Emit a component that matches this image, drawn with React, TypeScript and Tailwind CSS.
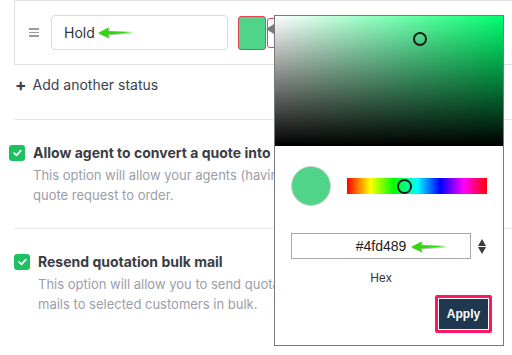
import React from 'react';

const HUE = 146;

function GreenArrow({ className }: { className?: string }) {
  return (
    <svg className={className} width="40" height="14" viewBox="0 0 40 14">
      <path d="M2 8.2 L13 2.4 L12 6.2 L38 7.2 L12 9.6 L13 13 Z" fill="#000" opacity="0.25" />
      <path d="M1 7 L12 1.2 L11 5 L37 6 L11 8.4 L12 12 Z" fill="#2fd80a" />
    </svg>
  );
}

function Check() {
  return (
    <svg width="9" height="8" viewBox="0 0 9 8">
      <path d="M1.2 4.2 L3.5 6.3 L7.8 1.6" stroke="#fff" strokeWidth="1.8" fill="none" strokeLinecap="round" strokeLinejoin="round" />
    </svg>
  );
}

function Option({ title, lines, indent }: { title: string; lines: string[]; indent: string }) {
  return (
    <div className={`flex gap-[8px] ${indent}`}>
      <span className="mt-[1px] flex h-[16px] w-[16px] shrink-0 items-center justify-center rounded-[3px] bg-[#1ec15f]">
        <Check />
      </span>
      <div className="whitespace-nowrap">
        <div className="text-[14px] leading-[18px] font-bold text-[#3a3d44]">{title}</div>
        <div className="mt-[3px] text-[13px] leading-[20px] text-[#9a9ea8]">
          {lines.map((l) => (
            <div key={l}>{l}</div>
          ))}
        </div>
      </div>
    </div>
  );
}

function Picker() {
  return (
    <div className="absolute top-[15px] left-[274px] h-[331px] w-[230px] border border-[#7a7a7a] bg-white font-['Liberation_Sans',Arial,sans-serif]">
      <div className="absolute top-[8px] left-[-9px] h-0 w-0 border-y-[5px] border-r-[8px] border-y-transparent border-r-[#7a7a7a]" />
      <div className="relative h-[130px] w-full" style={{ background: `hsl(${HUE},100%,50%)` }}>
        <div className="absolute inset-0 bg-gradient-to-r from-white to-transparent" />
        <div className="absolute inset-0 bg-gradient-to-b from-transparent to-black" />
        <div className="absolute top-[16px] left-[138px] h-[14px] w-[14px] rounded-full border-2 border-[#1d1d1d]" />
      </div>
      <div className="flex items-center pt-[20px] pl-[16px]">
        <div className="h-[40px] w-[40px] rounded-full border border-[#d0d0d0] bg-[#4fd489]" />
        <div className="relative ml-[16px] h-[16px] w-[140px] bg-[linear-gradient(to_right,#f00,#ff0,#0f0,#0ff,#00f,#f0f,#f00)]">
          <div className="absolute top-[1px] left-[50px] h-[15px] w-[15px] rounded-full border-2 border-[#1d1d1d]" />
        </div>
      </div>
      <div className="mt-[27px] flex items-center pl-[16px]">
        <div className="relative flex h-[26px] w-[180px] items-center justify-center border border-[#a9a9a9] text-[14px] text-[#222]">
          #4fd489
          <GreenArrow className="absolute top-[6px] left-[118px]" />
        </div>
        <div className="ml-[7px] flex flex-col items-center gap-[1px]">
          <div className="h-0 w-0 border-x-[4.5px] border-b-[7px] border-x-transparent border-b-[#3c3c3c]" />
          <div className="h-0 w-0 border-x-[4.5px] border-t-[7px] border-x-transparent border-t-[#3c3c3c]" />
        </div>
      </div>
      <div className="mt-[11px] ml-[16px] w-[180px] text-center text-[12px] leading-[16px] text-[#333]">Hex</div>
      <div className="mt-[9px] flex justify-end pr-[11px]">
        <div className="rounded-[2px] border-[3px] border-[#ff1561] p-[1px]">
          <div className="flex h-[30px] w-[49px] items-center justify-center bg-[#1f3850] text-[12px] font-bold text-white">
            Apply
          </div>
        </div>
      </div>
    </div>
  );
}

export default function App() {
  return (
    <div className="relative h-[355px] w-[512px] overflow-hidden bg-white font-['Inter',sans-serif]">
      <div className="ml-[14px] flex h-[65px] w-[520px] items-center border-y border-l border-[#dde1e6] pl-[14px]">
        <div className="flex flex-col gap-[2px]">
          <span className="h-[1.5px] w-[10px] bg-[#9a9a9a]" />
          <span className="h-[1.5px] w-[10px] bg-[#9a9a9a]" />
          <span className="h-[1.5px] w-[10px] bg-[#9a9a9a]" />
        </div>
        <div className="relative ml-[12px] flex h-[35px] w-[177px] items-center rounded-[4px] border border-[#d6d9de] pl-[12px] text-[14px] text-[#2f3440]">
          Hold
          <GreenArrow className="absolute top-[10px] left-[45px]" />
        </div>
        <div className="ml-[10px] h-[34px] w-[28px] rounded-[3px] border border-[#e04552] bg-[#4fd489]" />
        <div className="ml-[1px] h-[30px] w-[30px] rounded-[3px] border border-[#e04552] bg-white" />
      </div>
      <div className="mt-[10px] flex items-center pl-[15px] text-[14px] leading-[20px] text-[#3b414c]">
        <span className="mr-[6px] text-[17px] leading-[20px] font-bold">+</span>
        Add another status
      </div>
      <div className="mt-[24px] ml-[14px] border-t border-[#e3e5e8]" />
      <div className="pt-[24px]">
        <Option
          indent="pl-[9px]"
          title="Allow agent to convert a quote into order"
          lines={['This option will allow your agents (having permissions t', 'quote request to order.']}
        />
      </div>
      <div className="mt-[23px] ml-[14px] border-t border-[#e3e5e8]" />
      <div className="pt-[24px]">
        <Option
          indent="pl-[14px]"
          title="Resend quotation bulk mail"
          lines={['This option will allow you to send quotation reminder em', 'mails to selected customers in bulk.']}
        />
      </div>
      <Picker />
    </div>
  );
}
